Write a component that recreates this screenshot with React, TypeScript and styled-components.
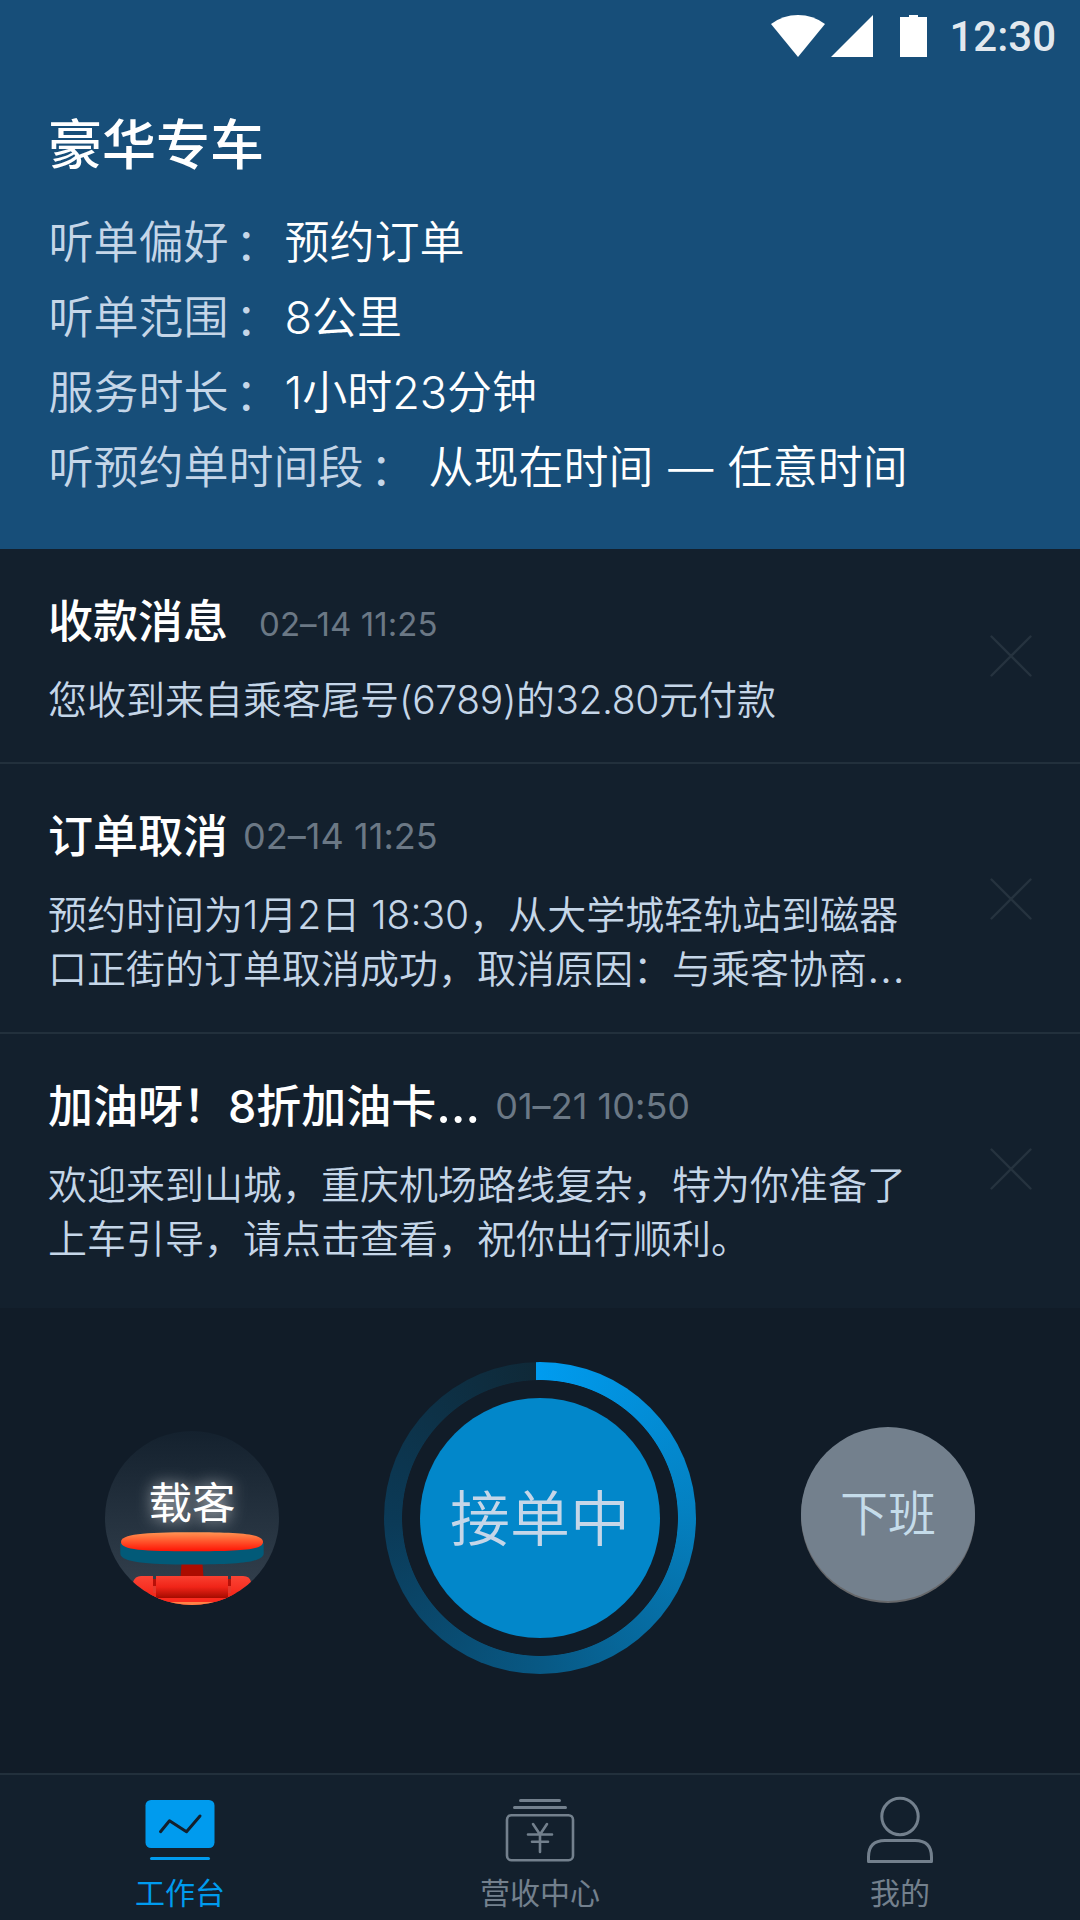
import React from "react";
import styled, { createGlobalStyle } from "styled-components";

const GlobalStyle = createGlobalStyle`
  * { box-sizing: border-box; }
  html, body { margin: 0; padding: 0; background: #111c28; }
  body { font-family: Inter, "Noto Sans CJK SC", sans-serif; }
`;

const Screen = styled.div`
  width: 1080px;
  height: 1920px;
  display: flex;
  flex-direction: column;
  background: #111c28;
  overflow: hidden;
`;

const Header = styled.header`
  height: 549px;
  flex: none;
  background: #174e79;
`;

const StatusBar = styled.div`
  height: 72px;
  display: flex;
  justify-content: flex-end;
  padding-right: 24px;
`;

const StatusIcons = styled.svg`
  width: 160px;
  height: 72px;
  margin-right: 22px;
`;

const Clock = styled.div`
  font: 500 42px/74px Roboto, sans-serif;
  color: rgba(255, 255, 255, 0.9);
`;

const ServiceName = styled.h1`
  margin: 38px 0 0 48px;
  font-size: 54px;
  line-height: 72px;
  font-weight: 500;
  color: #fff;
`;

const Settings = styled.dl`
  margin: 23px 0 0;
  padding-left: 48.5px;
`;

const Setting = styled.div`
  display: flex;
  height: 75px;
  font-size: 45px;
  line-height: 75px;
  font-weight: 350;
  white-space: pre;
`;

const Label = styled.dt<{ $width: number }>`
  width: ${(p) => p.$width}px;
  color: #c5d6e8;
`;

const Value = styled.dd`
  margin: 0;
  word-spacing: 2px;
  color: #fff;
`;

const Colon = styled.span`
  position: relative;
  top: 1.5px;
  margin-left: 6.5px;
`;

const Messages = styled.section`
  flex: none;
  background: #13202d;
`;

const Message = styled.article<{ $height: number }>`
  height: ${(p) => p.$height}px;
  display: flex;
  justify-content: space-between;
  padding: 0 48px;
  border-bottom: 2px solid #22303c;
  &:last-child { border-bottom: 0; }
`;

const MessageText = styled.div`
  padding-top: 41px;
`;

const MessageHead = styled.div`
  height: 63px;
  display: flex;
  white-space: pre;
`;

const MessageTitle = styled.h2`
  margin: 0;
  font-size: 45px;
  line-height: 63px;
  font-weight: 500;
  color: #fff;
`;

const Time = styled.time<{ $size: number; $gap: number; $line: number }>`
  margin-left: ${(p) => p.$gap}px;
  font-size: ${(p) => p.$size}px;
  line-height: ${(p) => p.$line}px;
  font-weight: 400;
  letter-spacing: 0.05px;
  color: #6b7885;
`;

const Body = styled.p`
  margin: 20px 0 0;
  font-size: 39px;
  line-height: 54px;
  font-weight: 350;
  color: #c5d6e8;
  white-space: pre;
`;

const Digits = styled.span`
  letter-spacing: -0.35px;
`;

const Ellipsis = styled.span<{ $scale: number }>`
  font-size: ${(p) => p.$scale}em;
  line-height: 0;
`;

const Close = styled.svg<{ $top: number }>`
  width: 42px;
  height: 42px;
  margin: ${(p) => p.$top}px 0 0;
  flex: none;
  stroke: #26333f;
  stroke-width: 2.4;
  stroke-linecap: round;
`;

const Controls = styled.section`
  flex: 1;
  display: flex;
  justify-content: space-between;
  align-items: flex-start;
  padding: 54px 105px 0;
`;

const RoundButton = styled.button<{ $top: number }>`
  width: 174px;
  height: 174px;
  margin: ${(p) => p.$top}px 0 0;
  padding: 0;
  border: 0;
  border-radius: 50%;
  display: grid;
  place-items: center;
  overflow: hidden;
  font-family: inherit;
`;

const CarryButton = styled(RoundButton)`
  background: linear-gradient(#14212e, #35424f);
  font-size: 43.5px;
  line-height: 60px;
  color: #fff;
  & > * { grid-area: 1 / 1; }
`;

const CarryLabel = styled.span`
  margin-bottom: 31px;
  text-shadow: 0 0 16px rgba(255, 255, 255, 0.75);
`;

const OffButton = styled(RoundButton)`
  background: #73808d;
  box-shadow: 0 2px 0 #67686b;
  font-size: 48px;
  font-weight: 350;
  line-height: 60px;
  color: #c5dcea;
`;

const Ring = styled.div`
  width: 312px;
  height: 312px;
  border-radius: 50%;
  display: grid;
  place-items: center;
  background:
    radial-gradient(circle, #111c28 137.5px, transparent 138.3px),
    conic-gradient(from -1.6deg, #009cf0, #0480c0 25%, #085985 50%, #0b3a57 75%, #0f2938);
`;

const Accept = styled.button`
  width: 240px;
  height: 240px;
  padding: 2px 0 0;
  border: 0;
  border-radius: 50%;
  background: #0287ca;
  color: #c5d6e8;
  font-family: inherit;
  font-size: 60px;
  font-weight: 350;
  line-height: 80px;
`;

const Nav = styled.nav`
  height: 147px;
  flex: none;
  display: grid;
  grid-template-columns: repeat(3, 1fr);
  border-top: 2px solid #22303c;
  background: #13202d;
`;

const Tab = styled.a<{ $active?: boolean }>`
  display: flex;
  flex-direction: column;
  align-items: center;
  padding-top: 15px;
  font-size: 30px;
  line-height: 40px;
  color: ${(p) => (p.$active ? "#009bee" : "#73808d")};
`;

const TabIcon = styled.svg`
  width: 80px;
  height: 80px;
  margin-bottom: 3px;
  overflow: visible;
  fill: none;
  stroke: currentColor;
  stroke-width: 3;
  stroke-linecap: round;
  stroke-linejoin: round;
`;

const Lantern = () => (
  <svg width="174" height="174" viewBox="0 0 174 174">
    <defs>
      <linearGradient id="disc" x1="0" y1="0" x2="0" y2="1">
        <stop offset="0" stopColor="#ff9350" />
        <stop offset="1" stopColor="#ff1204" />
      </linearGradient>
      <linearGradient id="drum" x1="0" y1="0" x2="0" y2="1">
        <stop offset="0" stopColor="#fa4030" />
        <stop offset="0.5" stopColor="#f02418" />
        <stop offset="1" stopColor="#a50b00" />
      </linearGradient>
      <linearGradient id="side" x1="0" y1="0" x2="0" y2="1">
        <stop offset="0" stopColor="#fb4434" />
        <stop offset="0.7" stopColor="#f42418" />
        <stop offset="1" stopColor="#d8180e" />
      </linearGradient>
    </defs>
    <path d="M76.5 133h21l1 13h-23z" fill="#ab0c00" />
    <path d="M15.3 112V123C17 131 38 133.5 87 133.5S157 131 158.7 123V112z" fill="#025a78" />
    <path d="M16 111C16 103 38 101.2 87 101.2S158 103 158 111 136 120.3 87 120.3 16 119 16 111z" fill="url(#disc)" />
    <path d="M28 151Q30 145 36 145H48V174H28zM126 145H138Q145 145 146 151V174H126z" fill="url(#side)" />
    <path d="M48 148h3v7h-3zM123 148h3v7h-3z" fill="#b81008" />
    <path d="M48 155h3v19h-3zM123 155h3v19h-3z" fill="#e4382b" />
    <path d="M28 162h118v12H28z" fill="#f42a1c" />
    <path d="M51 145h72v22H51z" fill="url(#drum)" />
    <path d="M51 167h72v4H51z" fill="#fb2a1e" />
    <path d="M50 171h74v3H50z" fill="#ff8246" />
  </svg>
);

const CloseIcon = ({ top }: { top: number }) => (
  <Close $top={top} viewBox="0 0 42 42">
    <path d="M1.5 1.5l39 39M40.5 1.5L1.5 40.5" />
  </Close>
);

type MessageData = {
  height: number;
  title: React.ReactNode;
  time: string;
  timeSize: number;
  timeGap: number;
  timeLine: number;
  closeTop: number;
  body: React.ReactNode;
};

const messages: MessageData[] = [
  {
    height: 215, title: "收款消息", time: "02–14 11:25",
    timeSize: 33, timeGap: 31, timeLine: 69, closeTop: 86,
    body: <>您收到来自乘客尾号<Digits>(6789)</Digits>的<Digits>32.80</Digits>元付款</>,
  },
  {
    height: 270, title: "订单取消", time: "02–14 11:25",
    timeSize: 36, timeGap: 15, timeLine: 63, closeTop: 114,
    body: <>预约时间为1月2日 18:30，从大学城轻轨站到磁器{"\n"}口正街的订单取消成功，取消原因：与乘客协商<Ellipsis $scale={1.15}>…</Ellipsis></>,
  },
  {
    height: 274, title: <>加油呀！8折加油卡<Ellipsis $scale={1.07}>…</Ellipsis></>, time: "01–21 10:50",
    timeSize: 36, timeGap: 15, timeLine: 63, closeTop: 114,
    body: <>欢迎来到山城，重庆机场路线复杂，特为你准备了{"\n"}上车引导，请点击查看，祝你出行顺利。</>,
  },
];

const settings = [
  { label: "听单偏好", value: "预约订单", width: 236 },
  { label: "听单范围", value: "8公里", width: 236 },
  { label: "服务时长", value: "1小时23分钟", width: 236 },
  { label: "听预约单时间段", value: "从现在时间 — 任意时间", width: 380 },
];

export default function App() {
  return (
    <>
      <GlobalStyle />
      <Screen>
        <Header>
          <StatusBar>
            <StatusIcons viewBox="0 0 160 72" fill="#fff">
              <path d="M4 24Q16 15 31 15T58 24L31 57z" />
              <path d="M64 57L106 15V57z" />
              <path d="M133 17h9v-2h9v2h9v40h-27z" />
            </StatusIcons>
            <Clock>12:30</Clock>
          </StatusBar>
          <ServiceName>豪华专车</ServiceName>
          <Settings>
            {settings.map((s) => (
              <Setting key={s.label}>
                <Label $width={s.width}>{s.label}<Colon>：</Colon></Label>
                <Value>{s.value}</Value>
              </Setting>
            ))}
          </Settings>
        </Header>
        <Messages>
          {messages.map((m, i) => (
            <Message key={i} $height={m.height}>
              <MessageText>
                <MessageHead>
                  <MessageTitle>{m.title}</MessageTitle>
                  <Time $size={m.timeSize} $gap={m.timeGap} $line={m.timeLine}>{m.time}</Time>
                </MessageHead>
                <Body>{m.body}</Body>
              </MessageText>
              <CloseIcon top={m.closeTop} />
            </Message>
          ))}
        </Messages>
        <Controls>
          <CarryButton $top={69}>
            <Lantern />
            <CarryLabel>载客</CarryLabel>
          </CarryButton>
          <Ring>
            <Accept>接单中</Accept>
          </Ring>
          <OffButton $top={65}>下班</OffButton>
        </Controls>
        <Nav>
          <Tab $active>
            <TabIcon viewBox="0 0 80 80">
              <rect x="5.5" y="10" width="69" height="48" rx="5.5" fill="currentColor" stroke="none" />
              <path d="M20.5 41.7l9-11 17 11L60 26" stroke="#13202d" />
              <path d="M11.5 68.5h57" />
            </TabIcon>
            工作台
          </Tab>
          <Tab>
            <TabIcon viewBox="0 0 80 80">
              <path d="M20.5 10.4h39M14.5 17.5h51" />
              <rect x="7" y="25.2" width="66" height="45" rx="4.5" strokeWidth="2.6" />
              <path d="M33 34l7 10.5L47 34M28 44.5h24M32 51.8h16M40 45v17" strokeWidth="2.6" />
            </TabIcon>
            营收中心
          </Tab>
          <Tab>
            <TabIcon viewBox="0 0 80 80">
              <circle cx="40" cy="26.5" r="18.2" />
              <path d="M8.5 71.5V67Q8.5 50.5 25 50.5H55Q71.5 50.5 71.5 67V71.5z" />
            </TabIcon>
            我的
          </Tab>
        </Nav>
      </Screen>
    </>
  );
}
